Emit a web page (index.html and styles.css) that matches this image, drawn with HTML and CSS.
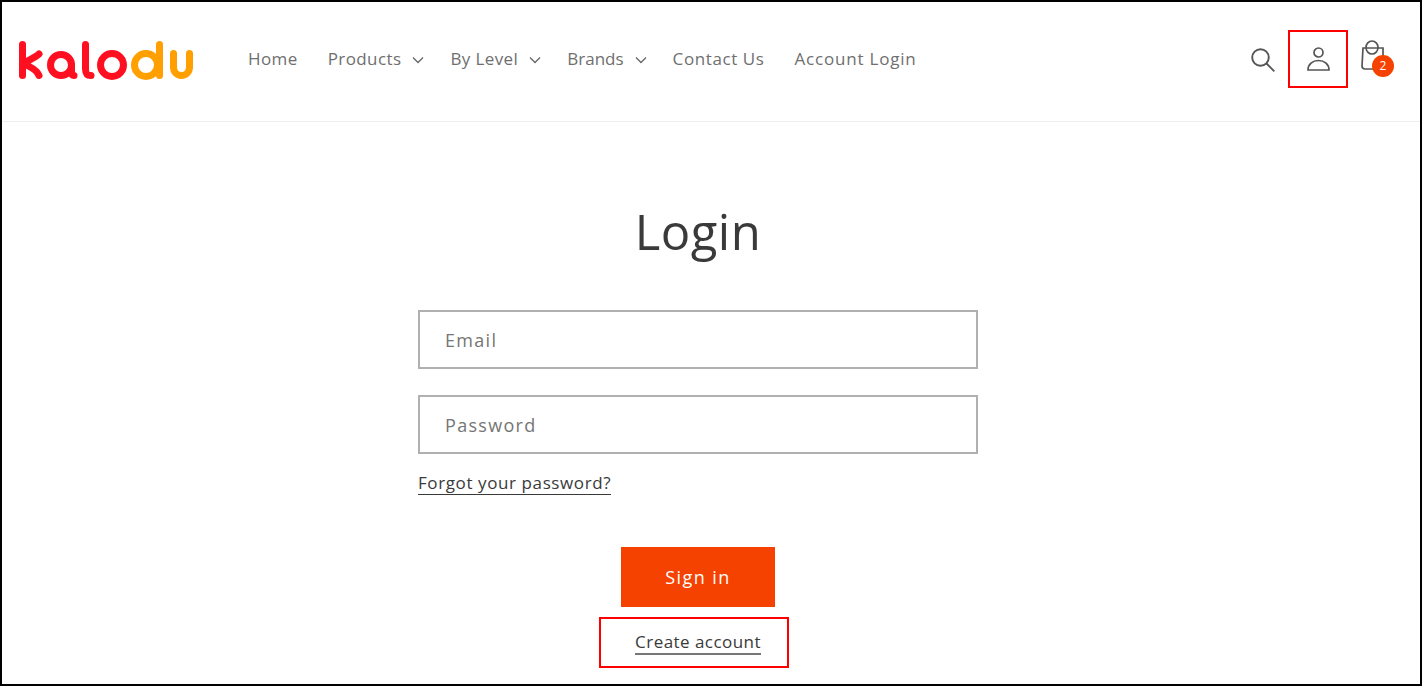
FILE: index.html
```html
<!DOCTYPE html>
<html lang="en">
<head>
    <meta charset="UTF-8">
    <title>Account - Kalodu</title>
    <link rel="stylesheet" href="styles.css">
</head>
<body>
    <div class="frame">
        <header class="header">
            <a class="logo" href="#" aria-label="kalodu">
                <svg width="176" height="42" viewBox="0 0 176 42" fill="none" stroke-width="7" stroke-linecap="round" stroke-linejoin="round">
                    <g stroke="#ff1020">
                        <path d="M3.500 5.500V36.500"/>
                        <path d="M20 15C17 18 12 20 8.500 22C6.500 23.500 6.500 25 8.500 26.500C13 29 18 31 20 36.500"/>
                        <circle cx="42" cy="26" r="10.500"/>
                        <path d="M52.500 26V33C52.500 35.500 53.500 36.500 55 36.500"/>
                        <path d="M66.500 5.500V30C66.500 34.500 68 36.500 72 36.500"/>
                        <circle cx="93" cy="26" r="11.500"/>
                    </g>
                    <g stroke="#ff9f00">
                        <circle cx="127" cy="26" r="11.500"/>
                        <path d="M140.500 5.500V36.500"/>
                        <path d="M154.500 14.500V28C154.500 33 158 36.500 162.500 36.500C167 36.500 170.500 33 170.500 28V14.500"/>
                    </g>
                </svg>
            </a>
            <nav class="nav">
                <a href="#">Home</a>
                <a href="#" class="has-sub">Products
                    <svg width="12" height="8" viewBox="0 0 12 8" fill="none" stroke="#666" stroke-width="1.300"><path d="M1 1.500L6 6.500L11 1.500"/></svg>
                </a>
                <a href="#" class="has-sub">By Level
                    <svg width="12" height="8" viewBox="0 0 12 8" fill="none" stroke="#666" stroke-width="1.300"><path d="M1 1.500L6 6.500L11 1.500"/></svg>
                </a>
                <a href="#" class="has-sub tight">Brands
                    <svg width="12" height="8" viewBox="0 0 12 8" fill="none" stroke="#666" stroke-width="1.300"><path d="M1 1.500L6 6.500L11 1.500"/></svg>
                </a>
                <a href="#" class="contact">Contact Us</a>
                <a href="#" class="wide">Account Login</a>
            </nav>
            <div class="icons">
                <a href="#" class="icon-search" aria-label="Search">
                    <svg width="24" height="24" viewBox="0 0 24 24" fill="none" stroke="#555" stroke-width="1.900"><circle cx="9.500" cy="9.500" r="8.300"/><path d="M15.500 15.500L23.300 23.300"/></svg>
                </a>
                <a href="#" class="icon-user" aria-label="Account">
                    <svg width="23" height="24" viewBox="0 0 23 24" fill="none" stroke="#555" stroke-width="1.700"><circle cx="11.500" cy="5.500" r="4.500"/><path d="M1 23C1 17.500 5.500 13.500 11.500 13.500C17.500 13.500 22 17.500 22 23Z"/></svg>
                </a>
                <a href="#" class="icon-cart" aria-label="Cart">
                    <svg width="26" height="32" viewBox="0 0 26 32" fill="none" stroke="#555" stroke-width="1.700"><path d="M3 8H23V29H5C3 29 2 28 2 26Z"/><ellipse cx="12" cy="7.500" rx="6" ry="6.500"/></svg>
                    <span class="badge">2</span>
                </a>
            </div>
        </header>
        <main class="main">
            <h1>Login</h1>
            <form class="login-form">
                <input class="field" type="email" placeholder="Email">
                <input class="field" type="password" placeholder="Password">
                <a class="forgot" href="#">Forgot your password?</a>
                <button class="signin" type="button">Sign in</button>
                <div class="create-box"><a href="#">Create account</a></div>
            </form>
        </main>
    </div>
</body>
</html>
```
FILE: styles.css
```css
* {
    box-sizing: border-box;
}
body {
    margin: 0;
    background-color: #fff;
    font-family: 'Open Sans', sans-serif;
    color: #3a3a3a;
    overflow: hidden;
}
a {
    text-decoration: none;
    color: inherit;
}
.frame {
    width: 1422px;
    height: 686px;
    border: 2px solid #000;
    overflow: hidden;
}
.header {
    display: flex;
    align-items: center;
    height: 120px;
    padding: 0 34px 6px 17px;
    border-bottom: 1px solid #eee;
}
.logo {
    display: flex;
    margin-top: 2px;
}
.nav {
    display: flex;
    align-items: center;
    gap: 30px;
    margin-left: 53px;
    font-size: 17px;
    letter-spacing: 0.4px;
    color: #6f6f6f;
}
.has-sub {
    display: flex;
    align-items: center;
    gap: 11px;
    margin-right: -4px;
}
.has-sub svg {
    margin-top: 3px;
}
.tight {
    letter-spacing: 0;
}
.contact {
    letter-spacing: 0.6px;
}
.wide {
    letter-spacing: 0.8px;
}
.icons {
    display: flex;
    align-items: center;
    margin-left: auto;
}
.icon-search {
    display: flex;
    margin-right: 13px;
    margin-top: 2px;
}
.icon-user {
    display: flex;
    align-items: center;
    justify-content: center;
    width: 60px;
    height: 58px;
    border: 2px solid #f00;
}
.icon-cart {
    display: flex;
    position: relative;
    margin-left: 12px;
    margin-top: -6px;
}
.badge {
    position: absolute;
    right: -8px;
    bottom: -5px;
    width: 22px;
    height: 22px;
    border-radius: 50%;
    background-color: #f64200;
    color: #fff;
    font-size: 12px;
    line-height: 22px;
    text-align: center;
}
.main {
    width: 1392px;
    display: flex;
    flex-direction: column;
    align-items: center;
}
h1 {
    margin: 77px 0 0;
    font-size: 49px;
    line-height: 64px;
    font-weight: 400;
    letter-spacing: 0.5px;
}
.login-form {
    width: 560px;
    margin-top: 47px;
    display: flex;
    flex-direction: column;
    align-items: center;
}
.field {
    width: 100%;
    height: 59px;
    margin-bottom: 25px;
    padding: 0 25px;
    border: 2px solid #b0b0b0;
    outline: none;
    font-family: inherit;
    font-size: 18px;
    letter-spacing: 1.3px;
}
.field + .field {
    margin-top: 1px;
}
.field::placeholder {
    color: #757575;
    opacity: 1;
}
.forgot {
    align-self: flex-start;
    margin-top: -7px;
    font-size: 17px;
    line-height: 22px;
    letter-spacing: 0.6px;
    border-bottom: 1px solid #3a3a3a;
}
.signin {
    width: 154px;
    height: 60px;
    margin-top: 52px;
    border: none;
    background-color: #f64200;
    color: #fff;
    font-family: inherit;
    font-size: 18px;
    letter-spacing: 1.4px;
}
.create-box {
    width: 190px;
    height: 51px;
    margin-top: 10px;
    margin-right: 8px;
    padding-top: 11px;
    padding-left: 8px;
    border: 2px solid #f00;
    text-align: center;
    font-size: 17px;
    line-height: 23px;
    letter-spacing: 0.45px;
}
.create-box a {
    display: inline-block;
    border-bottom: 2px solid #777;
}
```
